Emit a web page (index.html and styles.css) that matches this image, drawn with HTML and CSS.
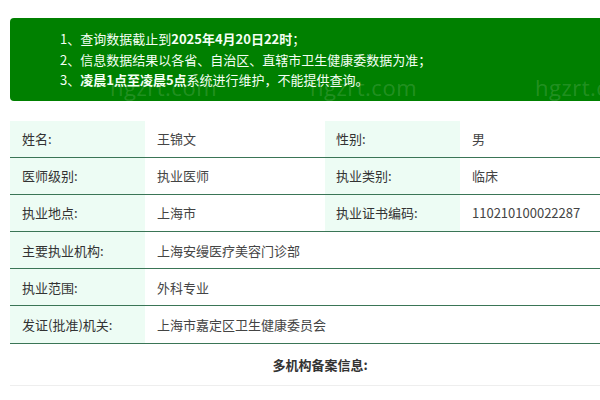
FILE: index.html
```html
<!DOCTYPE html>
<html lang="zh-CN">
<head>
<meta charset="utf-8">
<link rel="stylesheet" href="styles.css">
</head>
<body>
<div class="page">
  <div class="notice">
    <p>1、查询数据截止到<b>2025年4月20日22时</b>；</p>
    <p>2、信息数据结果以各省、自治区、直辖市卫生健康委数据为准；</p>
    <p>3、<b>凌晨1点至凌晨5点</b>系统进行维护，不能提供查询。</p>
    <span class="wm wm1">hgzrt.com</span>
    <span class="wm wm2">hgzrt.com</span>
    <span class="wm wm3">hgzrt.com</span>
  </div>
  <div class="table">
    <div class="row">
      <div class="lbl">姓名:</div><div class="val">王锦文</div>
      <div class="lbl">性别:</div><div class="val">男</div>
    </div>
    <div class="row">
      <div class="lbl">医师级别:</div><div class="val">执业医师</div>
      <div class="lbl">执业类别:</div><div class="val">临床</div>
    </div>
    <div class="row">
      <div class="lbl">执业地点:</div><div class="val">上海市</div>
      <div class="lbl">执业证书编码:</div><div class="val">110210100022287</div>
    </div>
    <div class="row">
      <div class="lbl">主要执业机构:</div><div class="val wide">上海安缦医疗美容门诊部</div>
    </div>
    <div class="row">
      <div class="lbl">执业范围:</div><div class="val wide">外科专业</div>
    </div>
    <div class="row">
      <div class="lbl">发证(批准)机关:</div><div class="val wide">上海市嘉定区卫生健康委员会</div>
    </div>
    <div class="multi">多机构备案信息:</div>
  </div>
</div>
</body>
</html>
```
FILE: styles.css
```css
html, body {
  margin: 0;
  padding: 0;
  background: #fff;
  overflow: hidden;
}
body {
  font-family: "Noto Sans CJK SC", "Noto Sans", sans-serif;
  font-size: 13px;
  color: #333;
}
.page {
  width: 620px;
  padding: 18px 10px 0 10px;
}
.notice {
  position: relative;
  background: #008000;
  border-radius: 4px;
  padding: 11px 0 10px 50px;
  color: #f4fff4;
  overflow: hidden;
}
.notice p {
  margin: 0;
  line-height: 20.5px;
  font-size: 13px;
}
.notice b {
  font-weight: bold;
}
.wm {
  position: absolute;
  top: 54px;
  font-family: "Open Sans", sans-serif;
  font-size: 22px;
  color: rgba(255, 255, 255, 0.15);
  letter-spacing: 0.5px;
}
.wm1 { left: 100px; }
.wm2 { left: 300px; }
.wm3 { left: 525px; }
.table {
  margin-top: 20px;
}
.row {
  display: grid;
  grid-template-columns: 135px 180px 135px 1fr;
  border-bottom: 1px solid #3a7556;
  height: 36.2px;
}
.lbl, .val {
  display: flex;
  align-items: center;
  padding-left: 12px;
}
.lbl {
  background: #edfcf4;
  color: #333;
}
.val {
  color: #444;
}
.lbl + .val + .lbl {
  padding-left: 11px;
}
.val.wide {
  grid-column: 2 / 5;
}
.multi {
  height: 41px;
  display: flex;
  align-items: center;
  justify-content: center;
  font-weight: bold;
  color: #333;
  border-bottom: 1px solid #eeeeee;
}
```
